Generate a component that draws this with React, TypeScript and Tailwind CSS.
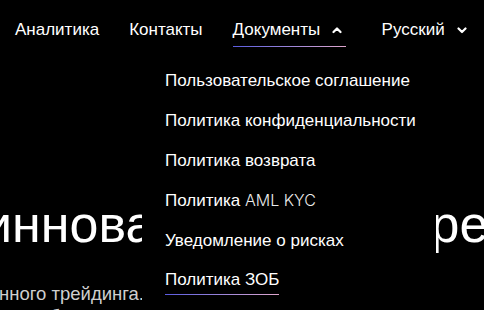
import React from 'react';

const docs = [
    'Пользовательское соглашение',
    'Политика конфиденциальности',
    'Политика возврата',
    'AML',
    'Уведомление о рисках',
    'Политика ЗОБ',
];

const Chevron: React.FC<{ up?: boolean }> = ({ up }) => (
    <svg width="10" height="10" viewBox="0 0 10 10" className="ml-[12px]">
        <path
            d={up ? 'M1.5 7 L5 3.5 L8.5 7' : 'M1.5 3.5 L5 7 L8.5 3.5'}
            fill="none"
            stroke="white"
            strokeWidth="2.2"
            strokeLinecap="round"
            strokeLinejoin="round"
        />
    </svg>
);

const App: React.FC = () => {
    return (
        <div
            className="relative h-[310px] w-[484px] overflow-hidden bg-black text-white"
            style={{ fontFamily: '"Liberation Sans", Arial, sans-serif' }}
        >
            {/* Header */}
            <nav className="flex h-[60px] items-start pl-[15px] pt-[20px] text-[17px]">
                <a className="leading-[20px]">Аналитика</a>
                <a className="ml-[30px] leading-[20px]">Контакты</a>
                <div className="ml-[30px] flex flex-col">
                    <div className="flex items-center leading-[20px]">
                        Документы
                        <Chevron up />
                    </div>
                    <div className="mt-[6px] h-px w-[113px] bg-gradient-to-r from-[#5b5be0] to-[#e0a6cc]" />
                </div>
                <div className="ml-[36px] flex items-center leading-[20px]">
                    Русский
                    <Chevron />
                </div>
            </nav>

            {/* Hero */}
            <div className="pt-[136px]">
                <h1 className="ml-[-17px] whitespace-nowrap text-[52px] leading-[56px] [word-spacing:17px]">
                    инновационного трейдинга
                </h1>
                <div className="ml-[-1px] mt-[30px] text-[18.5px] leading-[23px] text-[#cfcfcf]">
                    <p className="whitespace-nowrap">нного трейдинга. Надёжно, быстро, удобно.</p>
                    <p className="whitespace-nowrap">ля любых задач и обработки</p>
                </div>
            </div>

            {/* Dropdown */}
            <div className="absolute bottom-0 left-[142px] top-[60px] w-[294px] bg-black pl-[23px] text-[17px]">
                <ul className="flex flex-col">
                    {docs.map((d, i) => (
                        <li key={i} className="flex h-[40px] flex-col justify-center pt-[2px]">
                            {d === 'AML' ? (
                                <span>
                                    Политика{' '}
                                    <span
                                        className="text-[16px] font-light text-[#ececec]"
                                        style={{ fontFamily: 'Inter, sans-serif' }}
                                    >
                                        AML KYC
                                    </span>
                                </span>
                            ) : (
                                <span className="w-fit">
                                    {d}
                                    {i === docs.length - 1 && (
                                        <span className="mt-[1px] block h-px w-full bg-gradient-to-r from-[#5b5be0] to-[#e0a6cc]" />
                                    )}
                                </span>
                            )}
                        </li>
                    ))}
                </ul>
            </div>
        </div>
    );
};

export default App;
